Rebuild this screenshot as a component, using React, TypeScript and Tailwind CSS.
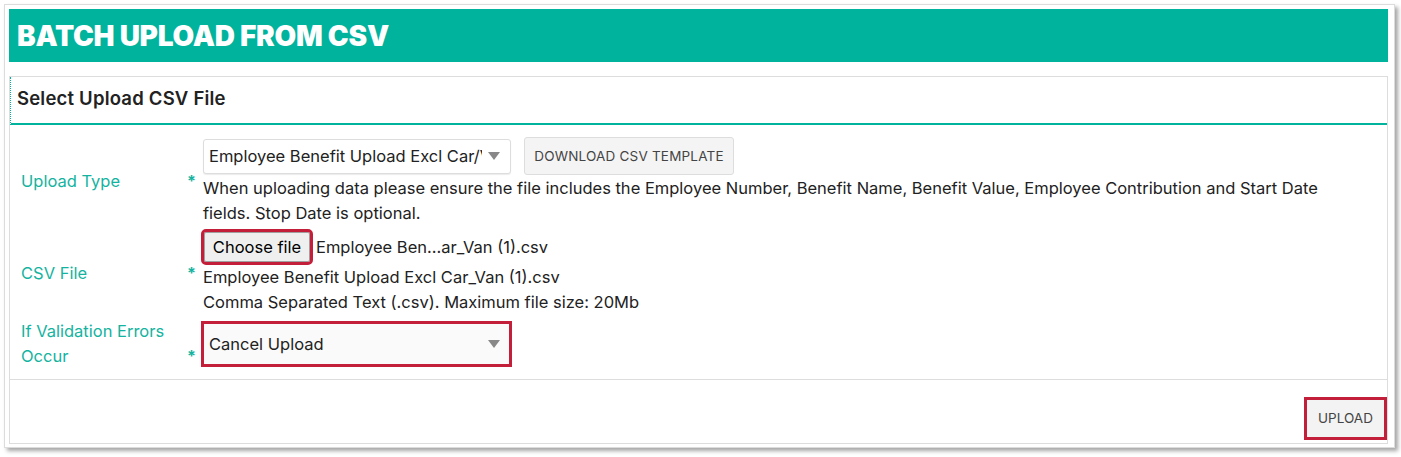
import React from "react"

function Arrow() {
  return (
    <svg width="12" height="8" viewBox="0 0 12 8" className="shrink-0">
      <path d="M0 0 H12 L6 8 Z" fill="#888888" />
    </svg>
  )
}

function Label({ children }: { children: React.ReactNode }) {
  return (
    <div className="w-[182px] shrink-0 flex items-end pr-[7px]">
      <div className="flex-1 text-[16.5px] leading-[25px] text-[#14b3a0]">{children}</div>
      <span className="text-[16px] leading-[25px] font-bold text-[#14b3a0]">*</span>
    </div>
  )
}

export default function App() {
  return (
    <div className="w-[1401px] h-[457px] bg-white overflow-hidden" style={{ fontFamily: "Inter, 'Noto Sans', sans-serif" }}>
      <div className="ml-[4px] mt-[4px] w-[1391px] h-[444px] border border-[#dcdcdc] shadow-[3px_3px_4px_rgba(0,0,0,0.35)] pl-[4px] pt-[4px] pr-[6px]">
        <div className="h-[53px] bg-[#00b39d] flex items-center pl-[8px]">
          <h1 className="text-white font-black text-[28px] tracking-[-0.25px] leading-none">BATCH UPLOAD FROM CSV</h1>
        </div>

        <div className="mt-[14px] border border-[#dddddd]">
          <div className="h-[48px] border-b-2 border-b-[#00b39d] border-l border-l-[#00b39d] [border-left-style:dotted] flex items-center pl-[6px] pb-[2px]">
            <h2 className="text-[18.5px] tracking-[0.2px] font-semibold text-[#222]">Select Upload CSV File</h2>
          </div>

          <div className="pt-[12px] pb-[10px] pl-[11px] border-b border-[#dddddd]">
            {/* upload type */}
            <div className="flex items-center">
              <Label>Upload Type</Label>
              <div className="flex-1">
                <div className="flex items-center gap-[13px] h-[38px]">
                  <div className="w-[308px] h-[35px] border border-[#dddddd] rounded-[3px] bg-white flex items-center pl-[5px] pr-[10px] shadow-[0_1px_1px_rgba(0,0,0,0.08)]">
                    <span className="flex-1 overflow-hidden whitespace-nowrap text-[16.5px] text-[#222]">Employee Benefit Upload Excl Car/Van</span>
                    <span className="ml-[6px]"><Arrow /></span>
                  </div>
                  <div className="w-[210px] h-[38px] border border-[#dddddd] rounded-[3px] bg-[#f4f4f4] flex items-center justify-center text-[13.5px] text-[#444] tracking-[0.2px]">
                    DOWNLOAD CSV TEMPLATE
                  </div>
                </div>
                <p className="mt-[1px] max-w-[1140px] text-[16.5px] leading-[25px] text-[#222]">
                  When uploading data please ensure the file includes the Employee Number, Benefit Name, Benefit Value, Employee Contribution and Start Date fields. Stop Date is optional.
                </p>
              </div>
            </div>

            {/* csv file */}
            <div className="flex items-center mt-[6px]">
              <Label>CSV File</Label>
              <div className="flex-1 pl-[1px]">
                <div className="flex items-center h-[30px]">
                  <div className="w-[106px] h-[30px] bg-[#efefef] border border-[#a0a0a0] rounded-[2px] flex items-center justify-center text-[16.5px] text-black outline-3 outline-solid outline-[#c41f3a]">
                    Choose file
                  </div>
                  <span className="ml-[6px] text-[16.5px] text-[#222]">Employee Ben...ar_Van (1).csv</span>
                </div>
                <div className="mt-[3px] text-[16.5px] leading-[25px] text-[#222] -ml-[1px]">
                  <div>Employee Benefit Upload Excl Car_Van (1).csv</div>
                  <div>Comma Separated Text (.csv). Maximum file size: 20Mb</div>
                </div>
              </div>
            </div>

            {/* validation */}
            <div className="flex items-center mt-[4px]">
              <Label>
                If Validation Errors
                <br />
                Occur
              </Label>
              <div className="flex-1 pl-[1px]">
                <div className="w-[305px] h-[40px] bg-[#fafafa] flex items-center pl-[5px] pr-[9px] outline-3 outline-solid outline-[#c41f3a]">
                  <span className="flex-1 text-[16.5px] text-[#222]">Cancel Upload</span>
                  <Arrow />
                </div>
              </div>
            </div>
          </div>

          <div className="h-[63px] flex justify-end items-end pb-[6px] pr-[3px]">
            <div className="w-[77px] h-[37px] bg-[#f3f3f3] flex items-center justify-center text-[13.5px] text-[#444] outline-3 outline-solid outline-[#c41f3a]">
              UPLOAD
            </div>
          </div>
        </div>
      </div>
    </div>
  )
}
